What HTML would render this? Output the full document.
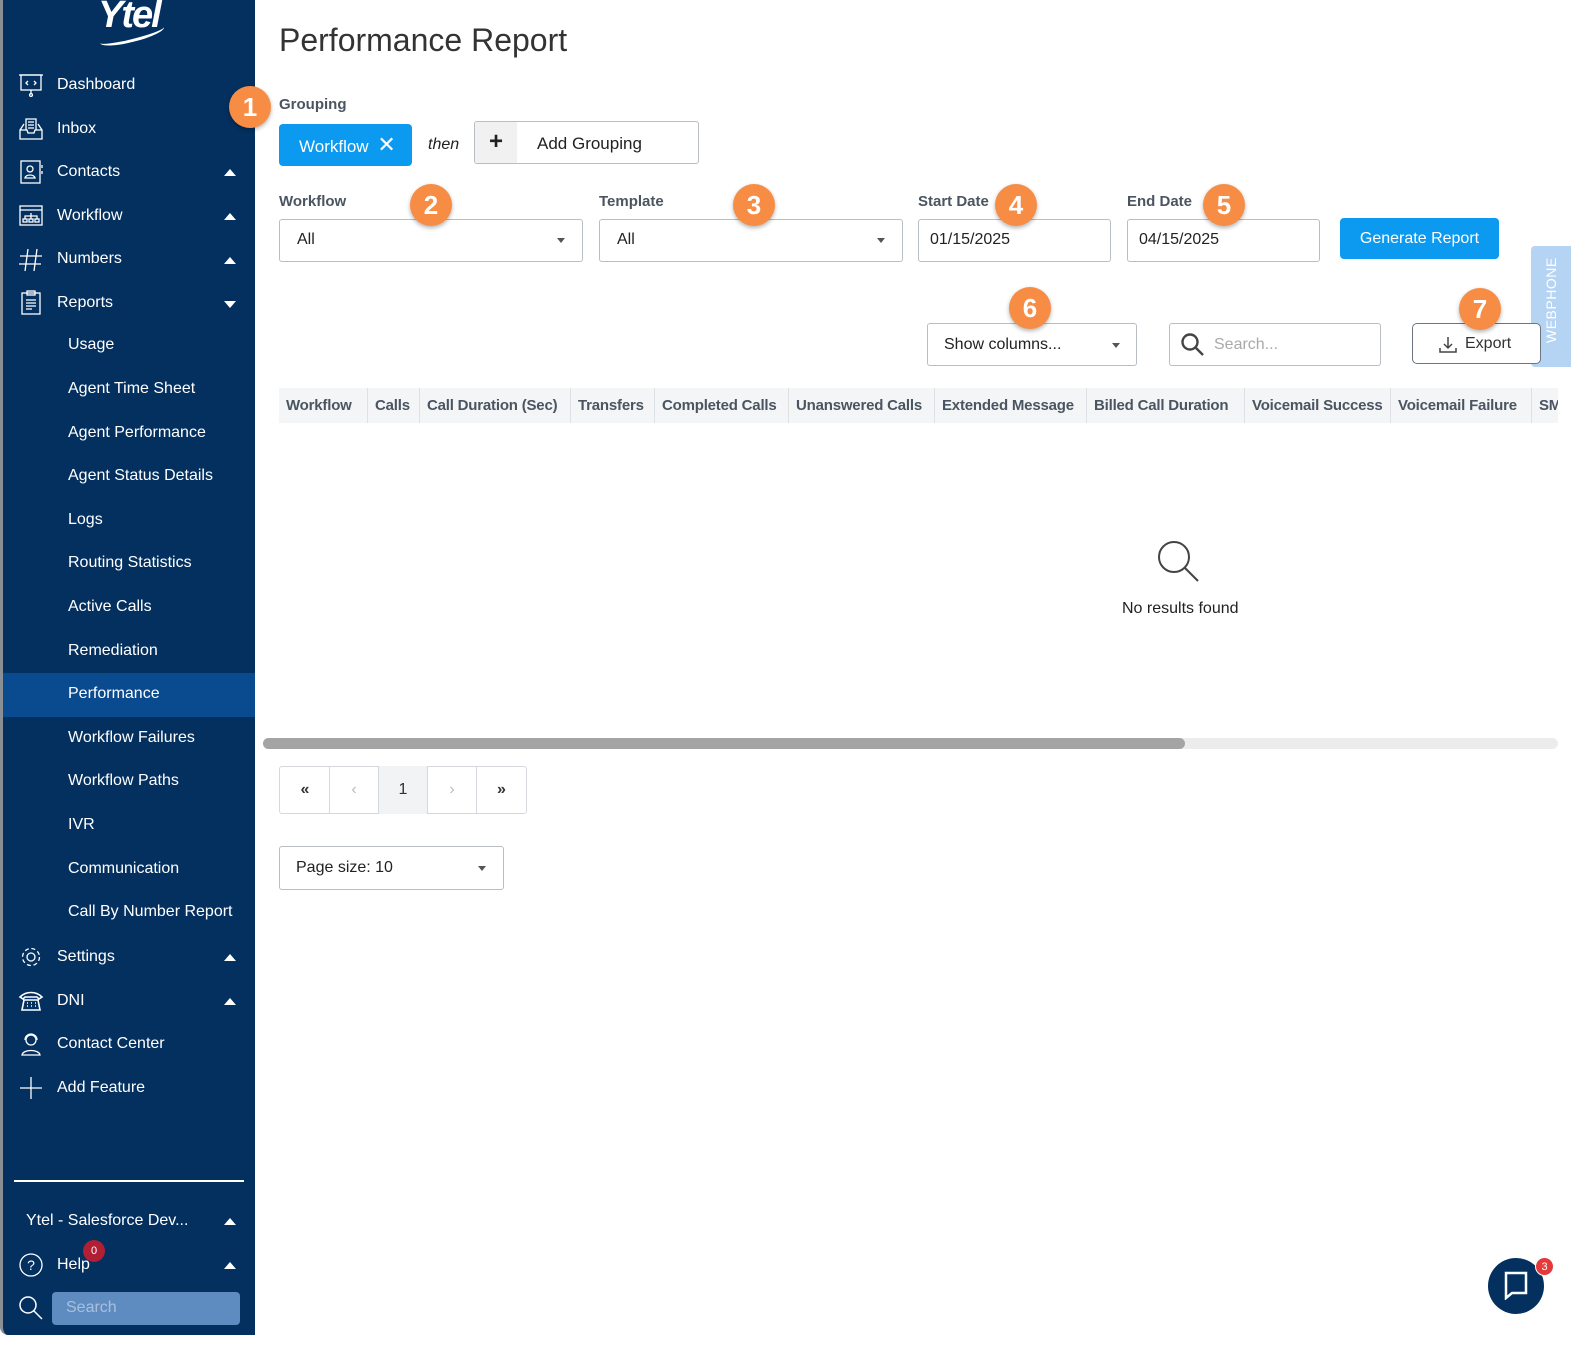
<!DOCTYPE html><html><head><meta charset="utf-8"><style>
*{box-sizing:border-box;margin:0;padding:0}
body{width:1588px;height:1353px;position:relative;background:#fff;font-family:"Liberation Sans",sans-serif;overflow:hidden;color:#222}
.a{position:absolute}
#sb{left:0;top:0;width:255px;height:1335px;background:#03305f;border-left:3px solid #8a8f96;border-bottom-left-radius:8px}
.ni{position:absolute;left:54px;color:#fff;font-size:16px}
.si{position:absolute;left:65px;color:#fff;font-size:16px}
.ic{position:absolute;left:15px;width:26px;height:26px}
.car{position:absolute;left:221px;width:0;height:0;border-left:6px solid transparent;border-right:6px solid transparent}
.up{border-bottom:7px solid #fff}.dn{border-top:7px solid #fff}
.lbl{font-size:15px;font-weight:bold;color:#4a5561}
.box{border:1px solid #b9bec4;border-radius:3px;background:#fff;font-size:16px;color:#222}
.mk{position:absolute;width:42px;height:42px;border-radius:50%;background:#f78c45;color:#fff;font-size:26px;font-weight:bold;text-align:center;line-height:42px;box-shadow:0 2px 4px rgba(0,0,0,.3)}
.tri{position:absolute;width:0;height:0;border-left:4px solid transparent;border-right:4px solid transparent;border-top:5px solid #555}
.th{position:absolute;top:388px;height:35px;line-height:35px;font-size:15px;font-weight:bold;color:#4a5561;padding-left:7px;border-right:1px solid #dde1e5;background:#f3f5f7;white-space:nowrap;overflow:hidden;letter-spacing:-.2px}
.pg{position:absolute;top:766px;width:49px;height:48px;border-right:1px solid #d5d9dd;text-align:center;line-height:48px;font-size:16px;color:#333}
</style></head><body>
<div id="sb" class="a">
<div class="a" style="left:95px;top:-6px;color:#fff;font-size:38px;font-weight:bold;font-style:italic;letter-spacing:-2px">Ytel</div>
<div class="a" style="left:96px;top:28px;width:66px;height:14px;border-bottom:3px solid #fff;border-radius:50%;transform:rotate(-14deg)"></div>
<svg class="ic" style="top:72px" viewBox="0 0 26 26" fill="none" stroke="#fff" stroke-width="1.3"><rect x="3" y="3" width="20" height="15"/><path d="M1 3h24M13 18v4M10 9l-2 2 2 2M16 9l2 2-2 2"/><circle cx="13" cy="23" r="1.4"/></svg>
<div class="ni" style="top:76px">Dashboard</div>
<svg class="ic" style="top:116px" viewBox="0 0 26 26" fill="none" stroke="#fff" stroke-width="1.3"><path d="M8 14V3h10v11M10 6h6M10 9h6M10 12h6M2 14l4-6M24 14l-4-6M2 14h7l1 3h6l1-3h7v9H2z"/></svg>
<div class="ni" style="top:120px">Inbox</div>
<svg class="ic" style="top:159px" viewBox="0 0 26 26" fill="none" stroke="#fff" stroke-width="1.3"><rect x="3" y="2" width="19" height="22"/><circle cx="12" cy="10" r="3"/><path d="M7 19c1-4 9-4 10 0zM24 6v3M24 12v3"/></svg>
<div class="ni" style="top:163px">Contacts</div><div class="car up" style="top:169px"></div>
<svg class="ic" style="top:203px" viewBox="0 0 26 26" fill="none" stroke="#fff" stroke-width="1.3"><rect x="2" y="3" width="22" height="19"/><path d="M2 7h22M13 10v3M7 16v-3h12v3M13 13v3"/><rect x="5" y="16" width="4" height="3"/><rect x="11" y="16" width="4" height="3"/><rect x="17" y="16" width="4" height="3"/></svg>
<div class="ni" style="top:207px">Workflow</div><div class="car up" style="top:213px"></div>
<svg class="ic" style="top:247px" viewBox="0 0 26 26" fill="none" stroke="#fff" stroke-width="1.3"><path d="M10 2L7 24M19 2l-3 22M2 9h22M1 17h22"/></svg>
<div class="ni" style="top:250px">Numbers</div><div class="car up" style="top:257px"></div>
<svg class="ic" style="top:290px" viewBox="0 0 26 26" fill="none" stroke="#fff" stroke-width="1.3"><rect x="4" y="3" width="18" height="21"/><rect x="9" y="1" width="8" height="4"/><path d="M8 10h10M8 13h10M8 16h10M8 19h6"/></svg>
<div class="ni" style="top:294px">Reports</div><div class="car dn" style="top:301px"></div>
<div class="si" style="top:336px">Usage</div>
<div class="si" style="top:380px">Agent Time Sheet</div>
<div class="si" style="top:424px">Agent Performance</div>
<div class="si" style="top:467px">Agent Status Details</div>
<div class="si" style="top:511px">Logs</div>
<div class="si" style="top:554px">Routing Statistics</div>
<div class="si" style="top:598px">Active Calls</div>
<div class="si" style="top:642px">Remediation</div>
<div class="a" style="left:0;top:673px;width:252px;height:44px;background:#0a4a8f"></div>
<div class="si" style="top:685px">Performance</div>
<div class="si" style="top:729px">Workflow Failures</div>
<div class="si" style="top:772px">Workflow Paths</div>
<div class="si" style="top:816px">IVR</div>
<div class="si" style="top:860px">Communication</div>
<div class="si" style="top:903px">Call By Number Report</div>
<svg class="ic" style="top:944px" viewBox="0 0 26 26" fill="none" stroke="#fff" stroke-width="1.3"><circle cx="13" cy="13" r="4"/><circle cx="13" cy="13" r="8.5" stroke-dasharray="4 2.7"/></svg>
<div class="ni" style="top:948px">Settings</div><div class="car up" style="top:954px"></div>
<svg class="ic" style="top:988px" viewBox="0 0 26 26" fill="none" stroke="#fff" stroke-width="1.6"><path d="M2 9c6-6 16-6 22 0l-3 2-2-2H7l-2 2zM6 12h14l2 10H4z"/><path d="M9 15h1M13 15h1M17 15h1M9 18h1M13 18h1M17 18h1"/></svg>
<div class="ni" style="top:992px">DNI</div><div class="car up" style="top:998px"></div>
<svg class="ic" style="top:1031px" viewBox="0 0 26 26" fill="none" stroke="#fff" stroke-width="1.3"><circle cx="13" cy="9" r="5"/><path d="M7 9a6 6 0 0112 0M4 24c1-6 17-6 18 0z"/></svg>
<div class="ni" style="top:1035px">Contact Center</div>
<svg class="ic" style="top:1075px" viewBox="0 0 26 26" fill="none" stroke="#fff" stroke-width="1.3"><path d="M13 2v22M2 13h22"/></svg>
<div class="ni" style="top:1079px">Add Feature</div>
<div class="a" style="left:11px;top:1180px;width:230px;height:2px;background:#fff"></div>
<div class="a" style="left:23px;top:1212px;color:#fff;font-size:16px">Ytel - Salesforce Dev...</div><div class="car up" style="top:1218px"></div>
<svg class="ic" style="top:1252px" viewBox="0 0 26 26" fill="none" stroke="#fff" stroke-width="1.3"><circle cx="13" cy="13" r="11"/><text x="13" y="18" fill="#fff" stroke="none" font-size="14" text-anchor="middle" font-family="Liberation Sans">?</text></svg>
<div class="ni" style="top:1256px">Help</div><div class="car up" style="top:1262px"></div>
<div class="a" style="left:80px;top:1240px;width:22px;height:22px;border-radius:50%;background:#b01f34;color:#fff;font-size:11px;text-align:center;line-height:22px">0</div>
<svg class="ic" style="top:1295px" viewBox="0 0 26 26" fill="none" stroke="#fff" stroke-width="1.5"><circle cx="10" cy="10" r="8"/><path d="M16 16l8 8"/></svg>
<div class="a" style="left:49px;top:1292px;width:188px;height:33px;background:#5f8cc0;border-radius:4px;color:#a9c0dc;font-size:16px;padding:7px 14px">Search</div>
</div>

<div class="a" style="left:279px;top:22px;font-size:32px;color:#333">Performance Report</div>
<div class="a lbl" style="left:279px;top:96px">Grouping</div>
<div class="a" style="left:279px;top:124px;width:133px;height:42px;background:#0b9af0;border-radius:4px;color:#fff;font-size:17px;line-height:42px;padding-left:20px">Workflow <span style="font-size:22px;font-weight:300;margin-left:4px">✕</span></div>
<div class="a" style="left:428px;top:136px;font-style:italic;font-size:16px">then</div>
<div class="a box" style="left:474px;top:121px;width:225px;height:43px;overflow:hidden"><div class="a" style="left:0;top:0;width:42px;height:43px;background:#f1f1f2;font-size:24px;font-weight:bold;text-align:center;line-height:40px">+</div><div class="a" style="left:62px;top:12px;font-size:17px">Add Grouping</div></div>

<div class="a lbl" style="left:279px;top:193px">Workflow</div>
<div class="a lbl" style="left:599px;top:193px">Template</div>
<div class="a lbl" style="left:918px;top:193px">Start Date</div>
<div class="a lbl" style="left:1127px;top:193px">End Date</div>
<div class="a box" style="left:279px;top:219px;width:304px;height:43px;padding:11px 17px">All</div><div class="tri" style="left:557px;top:238px"></div>
<div class="a box" style="left:599px;top:219px;width:304px;height:43px;padding:11px 17px">All</div><div class="tri" style="left:877px;top:238px"></div>
<div class="a box" style="left:918px;top:219px;width:193px;height:43px;padding:11px 11px">01/15/2025</div>
<div class="a box" style="left:1127px;top:219px;width:193px;height:43px;padding:11px 11px">04/15/2025</div>
<div class="a" style="left:1340px;top:218px;width:159px;height:41px;background:#0b9af0;border-radius:4px;color:#fff;font-size:16px;text-align:center;line-height:41px">Generate Report</div>
<div class="a" style="left:1531px;top:246px;width:40px;height:121px;background:#b5d3f3;border-radius:4px 0 0 4px"></div>
<div class="a" style="left:1514px;top:298px;transform:rotate(-90deg);color:#fff;font-size:14px;letter-spacing:.5px;width:74px;text-align:center">WEBPHONE</div>

<div class="a box" style="left:927px;top:323px;width:210px;height:43px;padding:12px 16px">Show columns...</div><div class="tri" style="left:1112px;top:343px"></div>
<div class="a box" style="left:1169px;top:323px;width:212px;height:43px;color:#aaa;padding:12px 0 0 44px">Search...</div>
<svg class="a" style="left:1180px;top:332px" width="26" height="26" viewBox="0 0 26 26" fill="none" stroke="#444" stroke-width="2.4"><circle cx="10" cy="10" r="7.5"/><path d="M16 16l7 7"/></svg>
<div class="a box" style="left:1412px;top:323px;width:129px;height:41px;border-color:#6d7680;border-radius:5px;color:#333;padding:11px 0 0 52px">Export</div>
<svg class="a" style="left:1438px;top:335px" width="20" height="20" viewBox="0 0 20 20" fill="none" stroke="#444" stroke-width="1.5"><path d="M10 2v11M6 9l4 4 4-4M2 13v4h16v-4"/></svg>

<div class="th" style="left:279px;width:89px">Workflow</div>
<div class="th" style="left:368px;width:52px">Calls</div>
<div class="th" style="left:420px;width:151px">Call Duration (Sec)</div>
<div class="th" style="left:571px;width:84px">Transfers</div>
<div class="th" style="left:655px;width:134px">Completed Calls</div>
<div class="th" style="left:789px;width:146px">Unanswered Calls</div>
<div class="th" style="left:935px;width:152px">Extended Message</div>
<div class="th" style="left:1087px;width:158px">Billed Call Duration</div>
<div class="th" style="left:1245px;width:146px">Voicemail Success</div>
<div class="th" style="left:1391px;width:141px">Voicemail Failure</div>
<div class="th" style="left:1532px;width:26px;border:0">SMS</div>

<svg class="a" style="left:1155px;top:538px" width="46" height="46" viewBox="0 0 46 46" fill="none" stroke="#444" stroke-width="2"><circle cx="19" cy="19" r="15"/><path d="M30 30l13 13"/></svg>
<div class="a" style="left:1122px;top:600px;font-size:16px">No results found</div>
<div class="a" style="left:263px;top:738px;width:1295px;height:11px;background:#ececec;border-radius:6px"></div>
<div class="a" style="left:263px;top:738px;width:922px;height:11px;background:#a4a4a4;border-radius:6px"></div>

<div class="a" style="left:279px;top:766px;width:248px;height:48px;border:1px solid #d5d9dd;border-radius:3px"></div>
<div class="pg" style="left:281px;font-weight:bold">«</div>
<div class="pg" style="left:330px;color:#bbb">‹</div>
<div class="pg" style="left:379px;background:#f1f3f5">1</div>
<div class="pg" style="left:428px;color:#bbb">›</div>
<div class="pg" style="left:477px;border:0;font-weight:bold">»</div>
<div class="a box" style="left:279px;top:846px;width:225px;height:44px;padding:12px 16px">Page size: 10</div><div class="tri" style="left:478px;top:866px"></div>

<div class="a" style="left:1488px;top:1258px;width:56px;height:56px;border-radius:50%;background:#03305f"></div>
<svg class="a" style="left:1502px;top:1270px" width="28" height="30" viewBox="0 0 28 30" fill="none" stroke="#fff" stroke-width="2.5"><path d="M4 3h20v20H10l-6 5z"/></svg>
<div class="a" style="left:1535px;top:1257px;width:19px;height:19px;border-radius:50%;background:#e5383b;color:#fff;font-size:11px;text-align:center;line-height:19px;border:1px solid #fff">3</div>

<div class="mk" style="left:229px;top:86px">1</div>
<div class="mk" style="left:410px;top:184px">2</div>
<div class="mk" style="left:733px;top:184px">3</div>
<div class="mk" style="left:995px;top:184px">4</div>
<div class="mk" style="left:1203px;top:184px">5</div>
<div class="mk" style="left:1009px;top:287px">6</div>
<div class="mk" style="left:1459px;top:288px">7</div>
</body></html>
